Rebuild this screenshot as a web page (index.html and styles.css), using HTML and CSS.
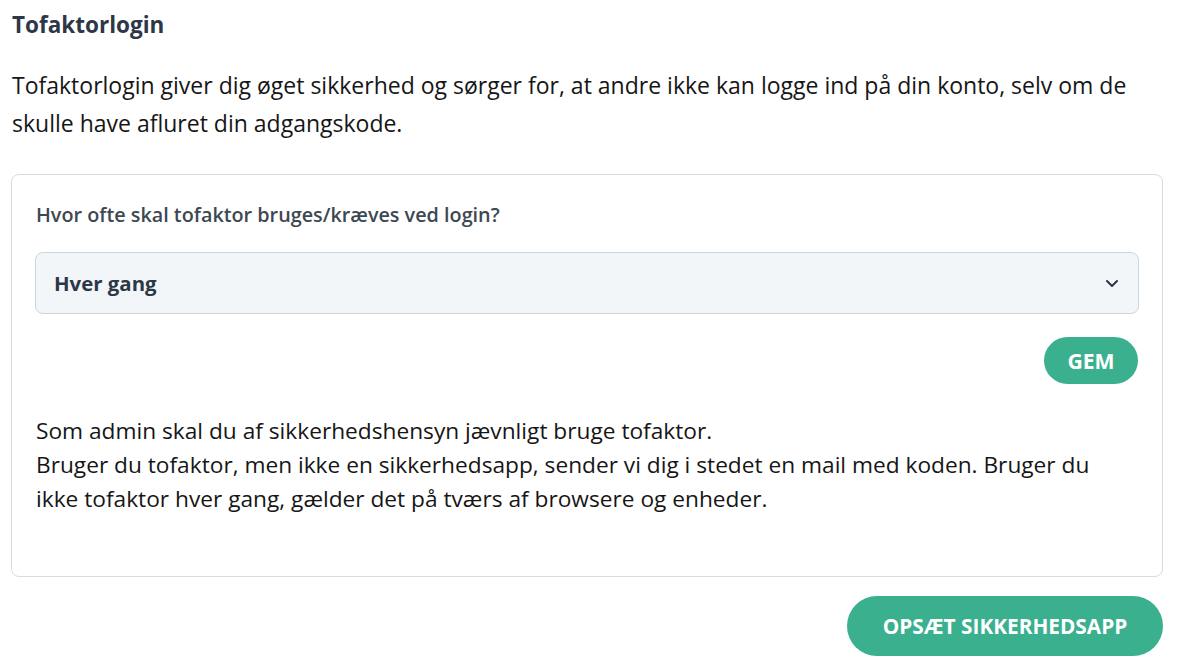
FILE: index.html
```html
<!DOCTYPE html>
<html lang="da">
<head>
<meta charset="utf-8">
<title>Tofaktorlogin</title>
<link rel="stylesheet" href="styles.css">
</head>
<body>
<div class="page">
  <h2 class="title">Tofaktorlogin</h2>
  <p class="intro">Tofaktorlogin giver dig øget sikkerhed og sørger for, at andre ikke kan logge ind på din konto, selv om de skulle have afluret din adgangskode.</p>
  <div class="card">
    <label class="label" for="freq">Hvor ofte skal tofaktor bruges/kræves ved login?</label>
    <div class="select">
      <span class="select-value" id="freq">Hver gang</span>
      <svg class="chevron" width="14" height="9" viewBox="0 0 14 9"><path d="M2 2l5 5 5-5" fill="none" stroke="#2d3748" stroke-width="2" stroke-linecap="round" stroke-linejoin="round"/></svg>
    </div>
    <div class="actions">
      <button class="btn btn-small">GEM</button>
    </div>
    <p class="note">Som admin skal du af sikkerhedshensyn jævnligt bruge tofaktor.<br>Bruger du tofaktor, men ikke en sikkerhedsapp, sender vi dig i stedet en mail med koden. Bruger du ikke tofaktor hver gang, gælder det på tværs af browsere og enheder.</p>
  </div>
  <div class="footer">
    <button class="btn btn-large">OPSÆT SIKKERHEDSAPP</button>
  </div>
</div>
</body>
</html>
```
FILE: styles.css
```css
* { box-sizing: border-box; }
body {
  margin: 0;
  background: #ffffff;
  font-family: "Open Sans", "Noto Sans", sans-serif;
  color: #1a1a1a;
}
.page {
  padding: 12px 14px 0 11px;
}
.title {
  margin: 0;
  padding-left: 1px;
  font-size: 22.5px;
  line-height: 26px;
  font-weight: 700;
  color: #2d3748;
}
.intro {
  margin: 28px 0 32px;
  padding-left: 1px;
  font-size: 23px;
  line-height: 38px;
  color: #161616;
}
.card {
  border: 1px solid #d3dde3;
  border-radius: 8px;
  padding: 28px 23px 60px 24px;
}
.label {
  display: block;
  font-size: 19.8px;
  line-height: 24px;
  font-weight: 600;
  color: #3d4852;
}
.select {
  margin-top: 25px;
  margin-left: -1px;
  height: 62px;
  display: flex;
  align-items: center;
  justify-content: space-between;
  padding: 0 19px 0 18px;
  background: #f2f6f8;
  border: 1px solid #cad6de;
  border-radius: 8px;
}
.select-value {
  font-size: 20.4px;
  font-weight: 700;
  color: #2d3748;
}
.chevron { display: block; }
.actions {
  margin-top: 23px;
  display: flex;
  justify-content: flex-end;
  padding-right: 1px;
}
.btn {
  border: none;
  background: #3bb08f;
  color: #ffffff;
  font-family: "Open Sans", "Noto Sans", sans-serif;
  font-weight: 700;
  border-radius: 999px;
  cursor: pointer;
}
.btn-small {
  width: 94px;
  height: 47px;
  font-size: 21.2px;
}
.note {
  margin: 30px 0 0;
  padding-right: 24px;
  font-size: 22.7px;
  line-height: 34px;
  color: #161616;
}
.footer {
  margin-top: 19px;
  display: flex;
  justify-content: flex-end;
}
.btn-large {
  width: 316px;
  height: 60px;
  font-size: 20.8px;
}
```
